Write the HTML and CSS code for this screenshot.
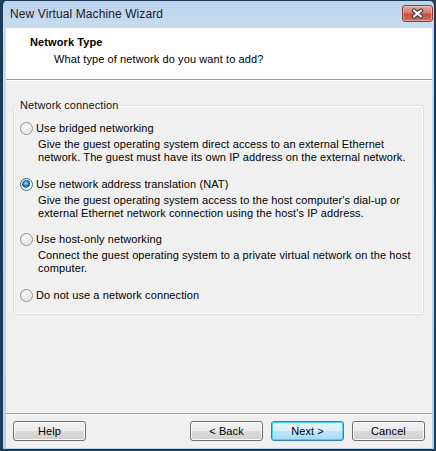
FILE: index.html
```html
<!DOCTYPE html>
<html lang="en">
<head>
    <meta charset="UTF-8">
    <title>New Virtual Machine Wizard</title>
    <link rel="stylesheet" href="styles.css">
</head>
<body>
<!-- wizard window, titlebar + client area -->
<div class="window">
    <div class="titlebar">
        <span class="title">New Virtual Machine Wizard</span>
        <button class="close-button" type="button" aria-label="Close">
            <svg width="13" height="11" viewBox="0 0 13 11">
                <path d="M3 2.5 L10 8.5 M10 2.5 L3 8.5" stroke="#4a4040" stroke-width="4.4" stroke-linecap="round" fill="none"/>
                <path d="M3 2.5 L10 8.5 M10 2.5 L3 8.5" stroke="#fff" stroke-width="2.2" stroke-linecap="round" fill="none"/>
            </svg>
        </button>
    </div>

    <div class="client">
        <header class="banner">
            <h1>Network Type</h1>
            <p>What type of network do you want to add?</p>
        </header>

        <section class="page">
            <fieldset class="group">
                <legend>Network connection</legend>

                <div class="option">
                    <label><span class="radio"></span>Use bridged networking</label>
                    <p>Give the guest operating system direct access to an external Ethernet network. The guest must have its own IP address on the external network.</p>
                </div>
                <div class="option">
                    <label><span class="radio checked"></span>Use network address translation (NAT)</label>
                    <p>Give the guest operating system access to the host computer's dial-up or external Ethernet network connection using the host's IP address.</p>
                </div>
                <div class="option">
                    <label><span class="radio"></span>Use host-only networking</label>
                    <p>Connect the guest operating system to a private virtual network on the host computer.</p>
                </div>
                <div class="option">
                    <label><span class="radio"></span>Do not use a network connection</label>
                </div>
            </fieldset>
        </section>

        <footer class="buttons">
            <button type="button">Help</button>
            <span class="spacer"></span>
            <button type="button">&lt; Back</button>
            <button type="button" class="default">Next &gt;</button>
            <button type="button">Cancel</button>
        </footer>
    </div>
</div>
</body>
</html>
```

FILE: styles.css
```css
body {
    margin: 0;
    background: #24405e;
    font-family: "Liberation Sans", Arial, sans-serif;
    font-size: 11px;
    letter-spacing: 0.1px;
    color: #000;
}

.window {
    width: 436px;
    height: 451px;
    box-sizing: border-box;
    display: flex;
    flex-direction: column;
    border: solid #1f3a57;
    border-width: 1px 2px 2px 3px;
    border-radius: 6px 6px 0 0;
    padding: 0 2px 1px 3px;
    background: linear-gradient(#bcd3eb, #c9dcf0 27px, #b7cfe8);
}

.titlebar {
    height: 27px;
    display: flex;
    align-items: center;
    padding-left: 4px;
}
.title {
    flex: 1;
    font-size: 12px;
    color: #1c1c1c;
    padding-bottom: 2px;
}
.close-button {
    width: 31px;
    height: 17px;
    margin: 0 -1px 3px 0;
    padding: 0;
    display: flex;
    align-items: center;
    justify-content: center;
    border: 1px solid #8a3b33;
    border-radius: 3px;
    background: linear-gradient(#e9a99b, #d67a6a 45%, #c4513f 55%, #d0705c);
    box-shadow: inset 0 0 0 1px rgba(255, 255, 255, 0.35);
}

.client {
    flex: 1;
    display: flex;
    flex-direction: column;
    background: #f0f0f0;
}

.banner {
    height: 52px;
    box-sizing: border-box;
    background: #fff;
    border-bottom: 1px solid #a0a0a0;
    padding: 8px 0 0 24px;
}
.banner h1 {
    margin: 0;
    font-size: 11px;
    font-weight: bold;
    line-height: 13px;
}
.banner p {
    margin: 4px 0 0 24px;
    line-height: 13px;
}

.page {
    flex: 1;
    border-top: 1px solid #fff;
    padding: 18px 8px 0 7px;
}

.group {
    margin: 0;
    padding: 10px 8px 12px 4px;
    border: 1px solid #d8e1e7;
    border-radius: 3px;
    box-shadow: inset 0 0 0 1px #fff;
}
.group legend {
    padding: 0 2px;
    line-height: 13px;
    color: #111;
}

.option {
    margin: 0 0 13.5px 2px;
}
.option:last-child {
    margin-bottom: 0;
}
.option label {
    display: flex;
    align-items: center;
    line-height: 13px;
}
.option p {
    margin: 3px 0 0 18px;
    line-height: 13px;
}

.radio {
    width: 11px;
    height: 11px;
    margin-right: 3px;
    border: 1px solid #8e8f8f;
    border-radius: 50%;
    background: radial-gradient(circle at 40% 35%, #fdfdfd, #e6e6e6 55%, #d0d0d0);
    box-shadow: inset 0 0 0 1px #f4f4f4;
}
.radio.checked {
    border-color: #3c6f94;
    background: radial-gradient(circle at 45% 40%, #b9e6fb 0, #3d93c7 2px, #1b5a8a 3.5px, #2f6d9a 4px, #e9eef2 4.6px, #f7f7f7);
}

.buttons {
    height: 35px;
    box-sizing: border-box;
    border-top: 1px solid #a0a0a0;
    box-shadow: inset 0 1px #fff;
    display: flex;
    align-items: flex-start;
    gap: 8px;
    padding: 7px 7px 0 7px;
}
.buttons .spacer {
    flex: 1;
}
.buttons button {
    width: 73px;
    height: 20px;
    padding: 0;
    font-family: inherit;
    font-size: 11px;
    letter-spacing: 0.1px;
    color: #000;
    border: 1px solid #707070;
    border-radius: 3px;
    background: linear-gradient(#f2f2f2, #ebebeb 50%, #dddddd 50%, #cfcfcf);
    box-shadow: inset 0 0 0 1px #fcfcfc;
}
.buttons button.default {
    border-color: #3c7fb1;
    background: linear-gradient(#eaf6fd, #d9f0fc 50%, #bee6fd 50%, #a7d9f5);
    box-shadow: inset 0 0 0 1px #48d0f8;
}
```
